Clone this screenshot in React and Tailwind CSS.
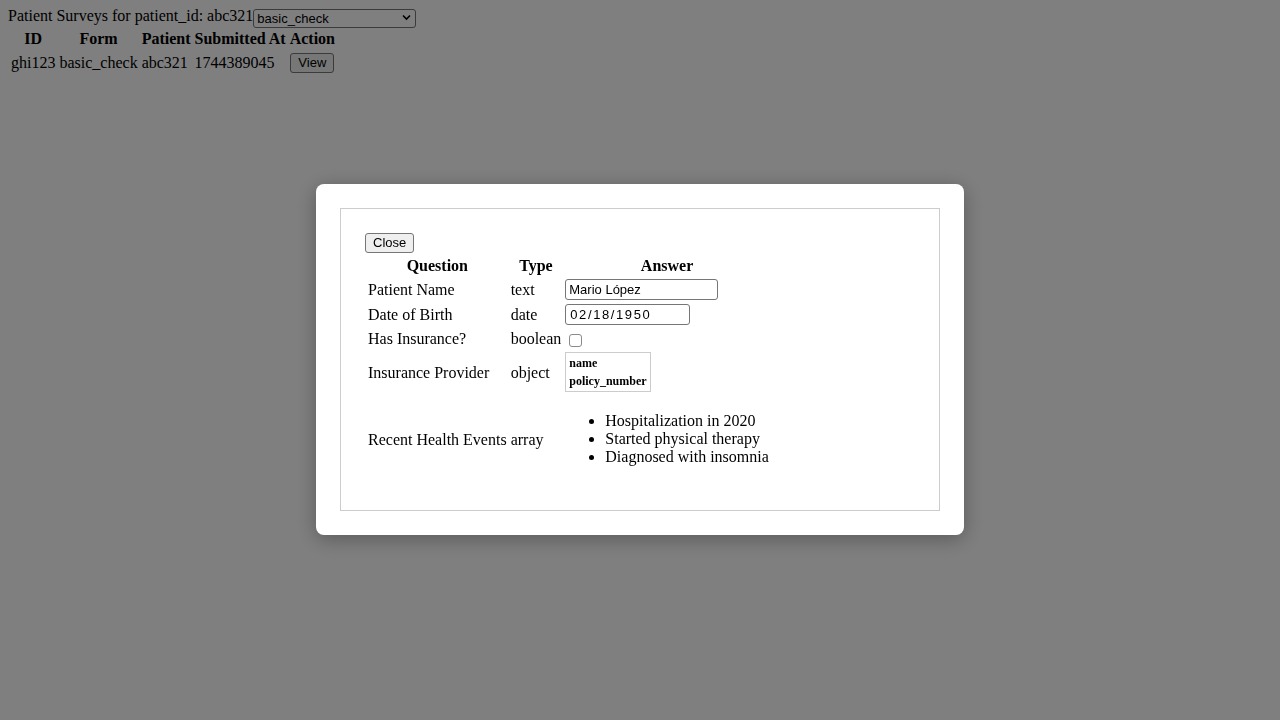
import React, { useState } from 'react';

const surveys = [
  { id: 'ghi123', form: 'basic_check', patient: 'abc321', submittedAt: 1744389045 },
];

const btn =
  "bg-[#efefef] border border-[#767676] rounded-[3px] px-[7px] h-[20px] leading-[18px] text-[13px] font-['Liberation_Sans',Arial,sans-serif] text-black";

const inputCls =
  "block bg-white border border-[#767676] rounded-[3px] h-[21px] px-[3px] text-[13px] font-['Liberation_Sans',Arial,sans-serif] text-black";

const App = () => {
  const [form, setForm] = useState('basic_check');
  const [open, setOpen] = useState(true);

  return (
    <div className="min-h-screen bg-white p-2 text-base leading-[19px] text-black font-['Liberation_Serif','Times_New_Roman',serif]">
      <div className="flex items-start h-[18px]">
        <span className="leading-[18px] mt-[-1px]">Patient Surveys for patient_id: abc321</span>
        <div className="relative">
          <select
            value={form}
            onChange={(e) => setForm(e.target.value)}
            className="w-[163px] h-[19px] bg-white border border-[#767676] rounded-[3px] pl-[3px] text-[13px] leading-[17px] font-['Liberation_Sans',Arial,sans-serif] appearance-none"
          >
            <option value="basic_check">basic_check</option>
          </select>
          <svg className="absolute right-[5px] top-[6px] pointer-events-none" width="9" height="7" viewBox="0 0 9 7">
            <path d="M1 1.5l3.5 3.5 3.5-3.5" fill="none" stroke="#000" strokeWidth="1.6" />
          </svg>
        </div>
      </div>

      <table className="border-separate border-spacing-[2px]">
        <thead>
          <tr>
            {['ID', 'Form', 'Patient', 'Submitted At', 'Action'].map((h) => (
              <th key={h} className="p-[1px] font-bold text-center">{h}</th>
            ))}
          </tr>
        </thead>
        <tbody>
          {surveys.map((s) => (
            <tr key={s.id}>
              <td className="p-[1px]">{s.id}</td>
              <td className="p-[1px]">{s.form}</td>
              <td className="p-[1px]">{s.patient}</td>
              <td className="p-[1px]">{s.submittedAt}</td>
              <td className="p-[1px] text-center">
                <button className={btn} onClick={() => setOpen(true)}>View</button>
              </td>
            </tr>
          ))}
        </tbody>
      </table>

      {open && (
        <div className="fixed inset-0 bg-black/50 flex items-center justify-center">
          <div className="bg-white rounded-lg p-6 mb-px shadow-[0_4px_20px_rgba(0,0,0,0.3)]">
            <div className="w-[600px] border border-[#cccccc] px-6 pt-6 pb-[25px]">
              <button className={`${btn} block`} onClick={() => setOpen(false)}>Close</button>
              <table className="border-separate border-spacing-[2px]">
                <thead>
                  <tr>
                    <th className="p-[1px] font-bold text-center">Question</th>
                    <th className="p-[1px] font-bold text-center">Type</th>
                    <th className="p-[1px] font-bold text-center">Answer</th>
                  </tr>
                </thead>
                <tbody>
                  <tr>
                    <td className="p-[1px]">Patient Name</td>
                    <td className="p-[1px]">text</td>
                    <td className="p-[1px] text-left">
                      <input className={`${inputCls} w-[153px]`} defaultValue="Mario López" />
                    </td>
                  </tr>
                  <tr>
                    <td className="p-[1px]">Date of Birth</td>
                    <td className="p-[1px]">date</td>
                    <td className="p-[1px] text-left">
                      <input
                        className={`${inputCls} w-[125px] pl-[4px] text-[11px] tracking-[1.6px] font-['Liberation_Mono',monospace]`}
                        defaultValue="02/18/1950"
                      />
                    </td>
                  </tr>
                  <tr>
                    <td className="p-[1px]">Has Insurance?</td>
                    <td className="p-[1px]">boolean</td>
                    <td className="p-[1px] text-left">
                      <input
                        type="checkbox"
                        className="appearance-none w-[13px] h-[13px] ml-[4px] bg-white border border-[#8a8a8a] rounded-[3px] align-middle"
                      />
                    </td>
                  </tr>
                  <tr>
                    <td className="p-[1px]">Insurance Provider</td>
                    <td className="p-[1px]">object</td>
                    <td className="p-[1px] text-left">
                      <table className="border border-[#cccccc] border-separate border-spacing-[2px]">
                        <tbody>
                          <tr><th className="p-[1px] text-left font-bold text-[12px] leading-[14px]">name</th></tr>
                          <tr><th className="p-[1px] text-left font-bold text-[12px] leading-[14px]">policy_number</th></tr>
                        </tbody>
                      </table>
                    </td>
                  </tr>
                  <tr>
                    <td className="p-[1px]">Recent Health Events</td>
                    <td className="p-[1px]">array</td>
                    <td className="p-[1px] text-left">
                      <ul className="list-disc pl-10 my-4 leading-[18px]">
                        <li>Hospitalization in 2020</li>
                        <li>Started physical therapy</li>
                        <li>Diagnosed with insomnia</li>
                      </ul>
                    </td>
                  </tr>
                </tbody>
              </table>
            </div>
          </div>
        </div>
      )}
    </div>
  );
};

export default App;
